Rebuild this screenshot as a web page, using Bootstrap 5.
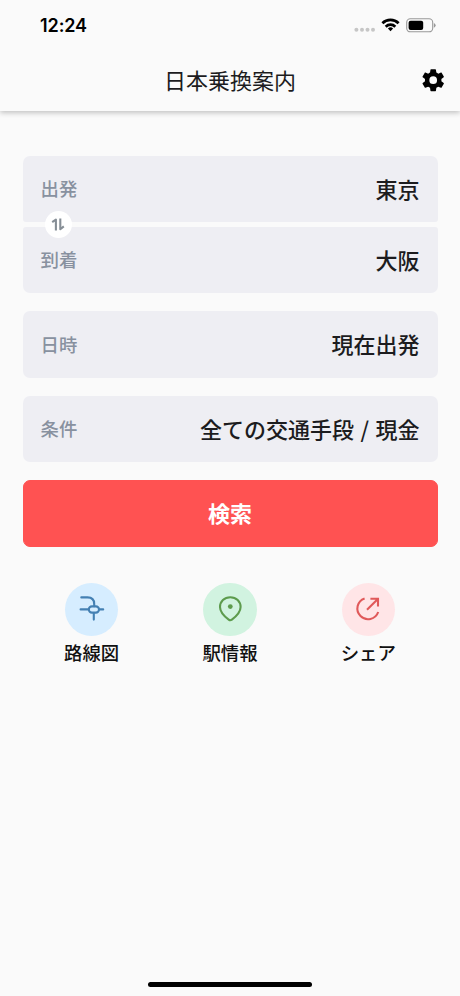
<!DOCTYPE html>
<html lang="ja">
<head>
<meta charset="utf-8">
<meta name="viewport" content="width=device-width, initial-scale=1">
<title>日本乗換案内</title>
<link href="https://cdn.jsdelivr.net/npm/bootstrap@5.3.0/dist/css/bootstrap.min.css" rel="stylesheet">
<style>
  body { background: #fafafa; color: #1c1c1e; font-family: "Noto Sans CJK JP", sans-serif; }
  .screen { height: 996px; }
  .topbar { height: 111px; box-shadow: 0 2px 5px rgba(0,0,0,.22); background: #fafafa; }
  .statusbar { height: 50px; padding: 0 24px 0 40px; }
  .clock { font: 600 18px/1 Inter, sans-serif; color: #000; letter-spacing: -.1px; padding-top: 2px; }
  .titlebar { height: 61px; padding: 0 14px; display: grid; grid-template-columns: 1fr auto 1fr; }
  .titlebar h1 { font-size: 22px; font-weight: 400; line-height: 32px; padding-bottom: 4px; }
  .planner { padding: 44.6px 22.5px 0; }
  .field { height: 66.4px; border: 0; border-radius: 7px; background: #eeeef3; padding: 0 18px; color: inherit; }
  .route { gap: 4.6px; }
  .route .field:first-child { border-radius: 7px 7px 3px 3px; }
  .route .field:last-child { border-radius: 3px 3px 7px 7px; }
  .field-name { font-size: 18.4px; font-weight: 500; color: #88919f; }
  .field-value { font-size: 22px; font-weight: 500; padding-bottom: 1.4px; }
  .field-value.spaced { word-spacing: 1.5px; }
  .swap { left: 22px; top: 50%; width: 27px; height: 27px; margin-top: -13.5px; background: #fff; }
  .search { height: 66.4px; border-radius: 7px; font-size: 22px; line-height: 30px; font-weight: 700; --bs-btn-color: #fff; --bs-btn-bg: #ff5252; --bs-btn-border-color: #ff5252; --bs-btn-hover-color: #fff; --bs-btn-hover-bg: #f04848; }
  .search span { display: block; padding-bottom: 3px; }
  .stack { gap: 18.2px; }
  .shortcuts { margin-top: 36px; }
  .shortcut { color: #111; font-size: 18.4px; font-weight: 500; line-height: 32px; }
  .disc { width: 53.5px; height: 53.5px; }
  .disc-map { background: #d6edff; color: #4480b3; }
  .disc-station { background: #d1f3e0; color: #5d9b4d; }
  .disc-share { background: #ffe5e7; color: #e0595a; }
  .homebar { width: 164px; height: 5px; background: #000; margin-bottom: 9px; }
</style>
<script src="https://cdn.jsdelivr.net/npm/bootstrap@5.3.0/dist/js/bootstrap.bundle.min.js" defer></script>
</head>
<body>
<div class="screen d-flex flex-column overflow-hidden">
  <header class="topbar">
    <div class="statusbar d-flex align-items-center justify-content-between">
      <span class="clock">12:24</span>
      <svg width="82" height="18" viewBox="0 0 82 18" aria-hidden="true">
        <g fill="#c6c6c6"><circle cx="2.4" cy="13.8" r="2"/><circle cx="8" cy="13.8" r="2"/><circle cx="13.5" cy="13.8" r="2"/><circle cx="19" cy="13.8" r="2"/></g>
        <g fill="none" stroke="#000" stroke-width="2.7"><path d="M28.4 7.3a11.5 11.5 0 0 1 16.2 0"/><path d="M31.7 10.7a6.8 6.8 0 0 1 9.6 0"/></g>
        <path d="M33.9 12.5a3.7 3.7 0 0 1 5.2 0L36.5 15.3z"/>
        <rect x="52.7" y="2.8" width="26" height="13" rx="3.6" fill="none" stroke="#999" stroke-width="1.1"/>
        <rect x="54.6" y="4.7" width="14.6" height="9.2" rx="2"/>
        <path d="M79.9 6.9q1.7.6 1.7 2.4t-1.7 2.4z" fill="#999"/>
      </svg>
    </div>
    <div class="titlebar align-items-center">
      <span></span>
      <h1 class="m-0">日本乗換案内</h1>
      <button class="btn p-0 border-0 ms-auto d-flex" type="button" aria-label="設定">
        <svg width="26.4" height="26.4" viewBox="0 0 24 24" fill="#000"><path d="M19.43 12.98c.04-.32.07-.64.07-.98s-.03-.66-.07-.98l2.11-1.65c.19-.15.24-.42.12-.64l-2-3.46c-.12-.22-.39-.3-.61-.22l-2.49 1c-.52-.4-1.08-.73-1.69-.98l-.38-2.65A.488.488 0 0 0 14 2h-4c-.25 0-.46.18-.49.42l-.38 2.65c-.61.25-1.17.59-1.69.98l-2.49-1c-.23-.09-.49 0-.61.22l-2 3.46c-.13.22-.07.49.12.64l2.11 1.65c-.04.32-.07.65-.07.98s.03.66.07.98l-2.11 1.65c-.19.15-.24.42-.12.64l2 3.46c.12.22.39.3.61.22l2.49-1c.52.4 1.08.73 1.69.98l.38 2.65c.03.24.24.42.49.42h4c.25 0 .46-.18.49-.42l.38-2.65c.61-.25 1.17-.59 1.69-.98l2.49 1c.23.09.49 0 .61-.22l2-3.46c.12-.22.07-.49-.12-.64zM12 15.5a3.5 3.5 0 1 1 0-7 3.5 3.5 0 0 1 0 7z"/></svg>
      </button>
    </div>
  </header>

  <main class="planner flex-grow-1">
    <div class="stack d-flex flex-column">
      <div class="route position-relative d-flex flex-column">
        <button type="button" class="field w-100 d-flex align-items-center justify-content-between"><span class="field-name">出発</span><span class="field-value">東京</span></button>
        <span class="swap position-absolute rounded-circle d-flex align-items-center justify-content-center z-1">
          <svg width="15" height="15" viewBox="0 0 15 15" fill="none" stroke="#868e96" stroke-width="2.1" stroke-linejoin="round"><path d="M1.2 5.2 4.9 2.7V13.6M9.3 1.4V12.2L12.8 9.4"/></svg>
        </span>
        <button type="button" class="field w-100 d-flex align-items-center justify-content-between"><span class="field-name">到着</span><span class="field-value">大阪</span></button>
      </div>
      <button type="button" class="field w-100 d-flex align-items-center justify-content-between"><span class="field-name">日時</span><span class="field-value">現在出発</span></button>
      <button type="button" class="field w-100 d-flex align-items-center justify-content-between"><span class="field-name">条件</span><span class="field-value spaced">全ての交通手段 / 現金</span></button>
      <button type="button" class="search btn w-100 p-0"><span>検索</span></button>
    </div>

    <nav class="shortcuts row g-0 text-center">
      <a class="shortcut col text-decoration-none d-flex flex-column align-items-center" href="#">
        <span class="disc disc-map rounded-circle d-flex align-items-center justify-content-center">
          <svg width="28" height="28" viewBox="0 0 28 28" fill="none" stroke="currentColor" stroke-width="2.1" stroke-linecap="round"><path d="M3.3 2.4H9.5Q16.2 2.4 16.2 9V11.2M2.6 14.4H10.6M21.2 14.4H25.2M15.8 18V24.6"/><rect x="10.8" y="11.4" width="10.2" height="6.2" rx="3.1"/></svg>
        </span>
        <span>路線図</span>
      </a>
      <a class="shortcut col text-decoration-none d-flex flex-column align-items-center" href="#">
        <span class="disc disc-station rounded-circle d-flex align-items-center justify-content-center">
          <svg width="28" height="28" viewBox="0 0 28 28" fill="none" stroke="currentColor" stroke-width="2.1" stroke-linejoin="round"><path d="M14.3 2.2C8.3 2.2 4 6.6 4 12c0 5.3 3.5 8.7 8.7 12.7q1.6 1.2 3.2 0C21 20.7 24.6 17.3 24.6 12 24.6 6.6 20.3 2.2 14.3 2.2z"/><circle cx="14.3" cy="11.6" r="2.4" fill="currentColor" stroke="none"/></svg>
        </span>
        <span>駅情報</span>
      </a>
      <a class="shortcut col text-decoration-none d-flex flex-column align-items-center" href="#">
        <span class="disc disc-share rounded-circle d-flex align-items-center justify-content-center">
          <svg width="28" height="28" viewBox="0 0 28 28" fill="none" stroke="currentColor" stroke-width="2.1"><path d="M10.6 3.4A10.7 10.7 0 1 0 24.2 17"/><path d="M13 14.8 23.6 4.2M16.4 3.8H24V11.6"/></svg>
        </span>
        <span>シェア</span>
      </a>
    </nav>
  </main>
  <div class="homebar rounded-pill mx-auto"></div>
</div>
</body>
</html>
